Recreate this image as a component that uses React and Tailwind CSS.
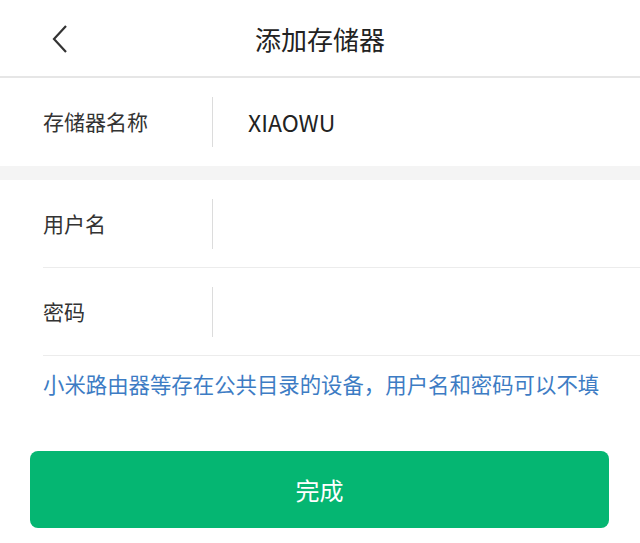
import { useState } from 'react';

const Row = ({ label, value, border }) => (
  <div className={`flex items-center h-[88px] ml-[43px] ${border ? 'border-b border-[#ececec]' : ''}`}>
    <div className="w-[169px] text-[21px] text-[#333]">{label}</div>
    <div className="w-px h-[50px] bg-[#dcdcdc]" />
    <div className="pl-[35px] text-[23px] text-[#222]">{value}</div>
  </div>
);

const App = () => {
  const [name] = useState('XIAOWU');

  return (
    <div
      className="w-[640px] h-[543px] bg-white overflow-hidden"
      style={{ fontFamily: '"Noto Sans CJK SC", "Noto Sans", sans-serif' }}
    >
      {/* header */}
      <div className="relative flex items-center justify-center h-[78px] border-b-2 border-[#e6e6e6]">
        <svg className="absolute left-[50px] top-[24px]" width="20" height="30" viewBox="0 0 20 30">
          <path d="M16 2 L4 15 L16 28" fill="none" stroke="#333" strokeWidth="2.2" />
        </svg>
        <span className="text-[26px] text-[#222]">添加存储器</span>
      </div>

      <Row label="存储器名称" value={name} />
      <div className="h-[14px] bg-[#f4f4f4]" />

      <Row label="用户名" value="" border />
      <Row label="密码" value="" border />

      <p className="ml-[43px] mt-[12px] text-[21.4px] text-[#3d7cc4]">
        小米路由器等存在公共目录的设备，用户名和密码可以不填
      </p>

      <button className="mt-[51px] ml-[30px] w-[579px] h-[77px] rounded-[8px] bg-[#05b672] text-white text-[24px]">
        完成
      </button>
    </div>
  );
};

export default App;
